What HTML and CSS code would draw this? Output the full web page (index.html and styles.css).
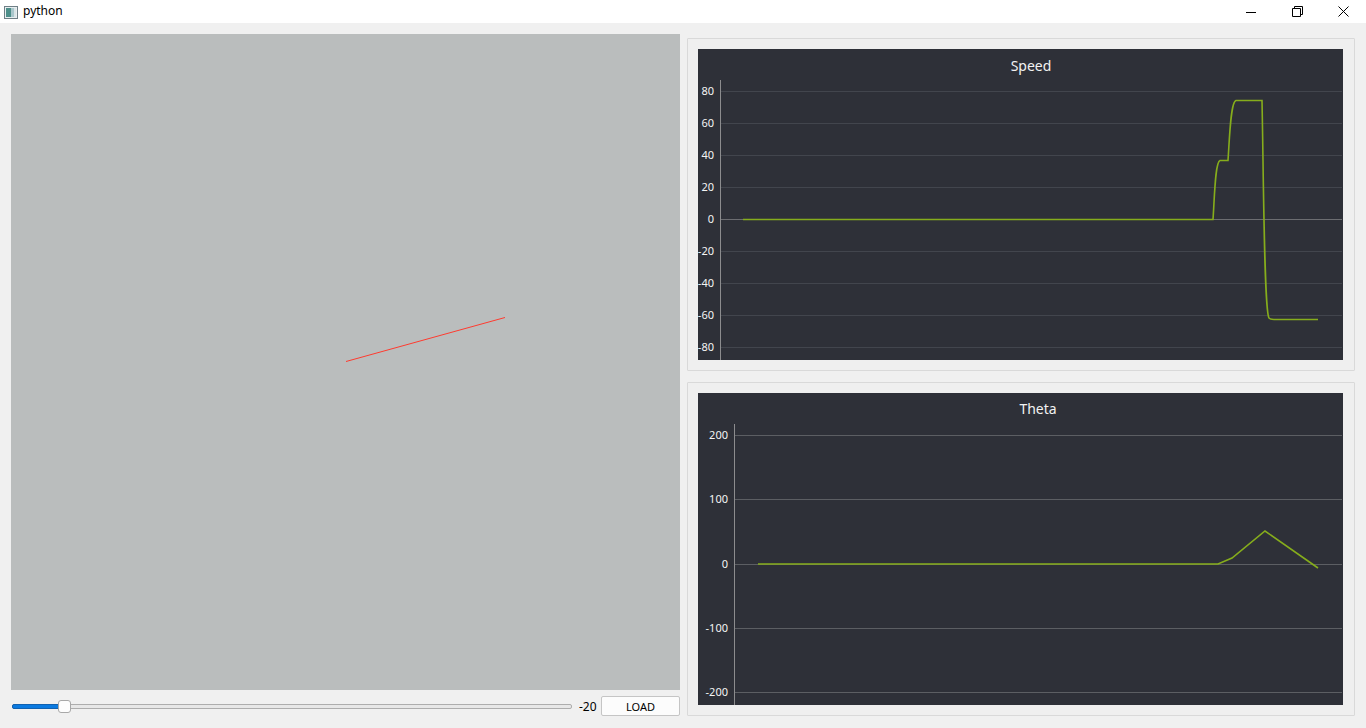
FILE: index.html
```html
<!DOCTYPE html>
<html>
<head>
<meta charset="utf-8">
<link rel="stylesheet" href="styles.css">
</head>
<body>
<div class="window">
  <header class="titlebar">
    <div class="app">
      <svg class="app-icon" width="14" height="13" viewBox="0 0 14 13">
        <rect x="0.5" y="0.5" width="13" height="12" fill="#e8eef0" stroke="#6f7f86"/>
        <rect x="2" y="2" width="5" height="9" fill="#4d8f8a"/>
        <rect x="7" y="2" width="3" height="9" fill="#a9c7cc"/>
        <rect x="10" y="2" width="2" height="9" fill="#d9e4e6"/>
      </svg>
      <span class="app-title">python</span>
    </div>
    <div class="controls">
      <span class="ctl">
        <svg width="10" height="10" viewBox="0 0 10 10"><path d="M0 5.5H10" stroke="#000" stroke-width="1"/></svg>
      </span>
      <span class="ctl">
        <svg width="11" height="11" viewBox="0 0 11 11"><path d="M0.5 2.5H8.5V10.5H0.5Z M2.5 2.5V0.5H10.5V8.5H8.5" fill="none" stroke="#000" stroke-width="1"/></svg>
      </span>
      <span class="ctl">
        <svg width="11" height="11" viewBox="0 0 11 11"><path d="M0.5 0.5L10.5 10.5M10.5 0.5L0.5 10.5" stroke="#000" stroke-width="1"/></svg>
      </span>
    </div>
  </header>

  <main class="content">
    <section class="left">
      <div class="canvas">
        <svg width="669" height="656" viewBox="0 0 669 656">
          <line x1="335" y1="327.5" x2="494" y2="283.5" stroke="#ff3b2f" stroke-width="1"/>
        </svg>
      </div>
      <div class="controlsrow">
        <div class="slider">
          <div class="groove"><div class="fill"></div></div>
          <div class="handle"></div>
        </div>
        <span class="value">-20</span>
        <button class="btn">LOAD</button>
      </div>
    </section>

    <section class="right">
      <div class="group">
        <div class="chart">
          <svg width="644" height="311" viewBox="0 0 644 311">
            <text class="ctitle" x="333" y="22">Speed</text>
            <g class="grid">
              <line x1="22" x2="644" y1="42.5" y2="42.5"/>
              <line x1="22" x2="644" y1="74.5" y2="74.5"/>
              <line x1="22" x2="644" y1="106.5" y2="106.5"/>
              <line x1="22" x2="644" y1="138.5" y2="138.5"/>
              <line x1="22" x2="644" y1="202.5" y2="202.5"/>
              <line x1="22" x2="644" y1="234.5" y2="234.5"/>
              <line x1="22" x2="644" y1="266.5" y2="266.5"/>
              <line x1="22" x2="644" y1="298.5" y2="298.5"/>
            </g>
            <line class="zero" x1="22" x2="644" y1="170.5" y2="170.5"/>
            <line class="axis" x1="22.5" x2="22.5" y1="31" y2="311"/>
            <g class="labels">
              <text x="16" y="46">80</text>
              <text x="16" y="78">60</text>
              <text x="16" y="110">40</text>
              <text x="16" y="142">20</text>
              <text x="16" y="174">0</text>
              <text x="16" y="206">-20</text>
              <text x="16" y="238">-40</text>
              <text x="16" y="270">-60</text>
              <text x="16" y="302">-80</text>
            </g>
            <path class="curve" d="M45 170.5 H515 C516.5 150 517 113 522 111.5 H530 C531.5 90 532.5 53 538 51.5 H564 C565.5 120 566 262 571 269 C572 270 573 270.5 576 270.5 H620"/>
          </svg>
        </div>
      </div>
      <div class="group">
        <div class="chart">
          <svg width="644" height="312" viewBox="0 0 644 312">
            <text class="ctitle" x="340" y="21">Theta</text>
            <g class="grid2">
              <line x1="36" x2="644" y1="42.5" y2="42.5"/>
              <line x1="36" x2="644" y1="106.5" y2="106.5"/>
              <line x1="36" x2="644" y1="171.5" y2="171.5"/>
              <line x1="36" x2="644" y1="235.5" y2="235.5"/>
              <line x1="36" x2="644" y1="299.5" y2="299.5"/>
            </g>
            <line class="axis" x1="36.5" x2="36.5" y1="31" y2="312"/>
            <g class="labels">
              <text x="30" y="46">200</text>
              <text x="30" y="110">100</text>
              <text x="30" y="175">0</text>
              <text x="30" y="239">-100</text>
              <text x="30" y="303">-200</text>
            </g>
            <path class="curve" d="M60 171 H520 L534 165 L567 138 L620 175"/>
          </svg>
        </div>
      </div>
    </section>
  </main>
</div>
</body>
</html>
```

FILE: styles.css
```css
* { box-sizing: border-box; }
html, body { margin: 0; padding: 0; }
body {
  width: 1366px;
  height: 728px;
  overflow: hidden;
  background: #f0f0f0;
  font-family: "Noto Sans", "Liberation Sans", sans-serif;
}
.window { display: flex; flex-direction: column; height: 728px; }

.titlebar {
  height: 23px;
  background: #ffffff;
  display: flex;
  align-items: center;
  justify-content: space-between;
}
.app { display: flex; align-items: center; padding-left: 4px; gap: 5px; }
.app-icon { display: block; margin-top: 1px; }
.app-title { font-size: 12px; color: #000; line-height: 14px; margin-top: -1px; }
.controls { display: flex; height: 23px; }
.ctl {
  width: 46px;
  height: 23px;
  display: flex;
  align-items: center;
  justify-content: center;
}
.ctl svg { display: block; }

.content {
  flex: 1;
  display: flex;
  gap: 7px;
  padding: 11px 11px 12px 11px;
}
.left { width: 669px; display: flex; flex-direction: column; }
.canvas { width: 669px; height: 656px; background: #babdbd; }
.canvas svg { display: block; }

.controlsrow {
  margin-top: 6px;
  height: 20px;
  display: flex;
  align-items: center;
}
.slider { position: relative; width: 560px; height: 20px; margin-left: 1px; }
.groove {
  position: absolute;
  left: 0; right: 0; top: 8px;
  height: 5px;
  background: #e7e7e7;
  border: 1px solid #adadad;
  border-radius: 2px;
}
.fill {
  width: 48px;
  height: 5px;
  margin: -1px 0 0 -1px;
  background: #0b7ae0;
  border: 1px solid #1262b0;
  border-radius: 2px;
}
.handle {
  position: absolute;
  left: 46px; top: 4px;
  width: 13px; height: 13px;
  background: #fdfdfd;
  border: 1px solid #a8a8a8;
  border-radius: 3px;
}
.value { font-size: 12px; color: #000; margin-left: 7px; width: 22px; }
.btn {
  width: 79px;
  height: 20px;
  margin-left: 0;
  background: #fcfcfc;
  border: 1px solid #c5c5c5;
  border-radius: 2px;
  font-family: "Noto Sans", "Liberation Sans", sans-serif;
  font-size: 11px;
  color: #000;
  padding: 0;
}

.right {
  width: 668px;
  display: flex;
  flex-direction: column;
  gap: 11px;
  padding-top: 4px;
}
.group {
  flex: 1;
  border: 1px solid #d9d9d9;
  border-radius: 1px;
  padding: 10px 11px 10px 10px;
  background: #efefef;
  display: flex;
}
.chart { flex: 1; background: #2e3038; }
.chart svg { display: block; }

.ctitle {
  fill: #f2f2f2;
  font-size: 14px;
  text-anchor: middle;
  font-family: "Noto Sans", "Liberation Sans", sans-serif;
}
.grid line { stroke: #42454d; stroke-width: 1; }
.grid2 line { stroke: #5c5e63; stroke-width: 1; }
.zero { stroke: #6c6d71; stroke-width: 1; }
.axis { stroke: #8c8c8e; stroke-width: 1; }
.labels text {
  fill: #f4f4f4;
  font-size: 11px;
  text-anchor: end;
  font-family: "Noto Sans", "Liberation Sans", sans-serif;
}
.curve { fill: none; stroke: #86ad1c; stroke-width: 1.6; }
```
